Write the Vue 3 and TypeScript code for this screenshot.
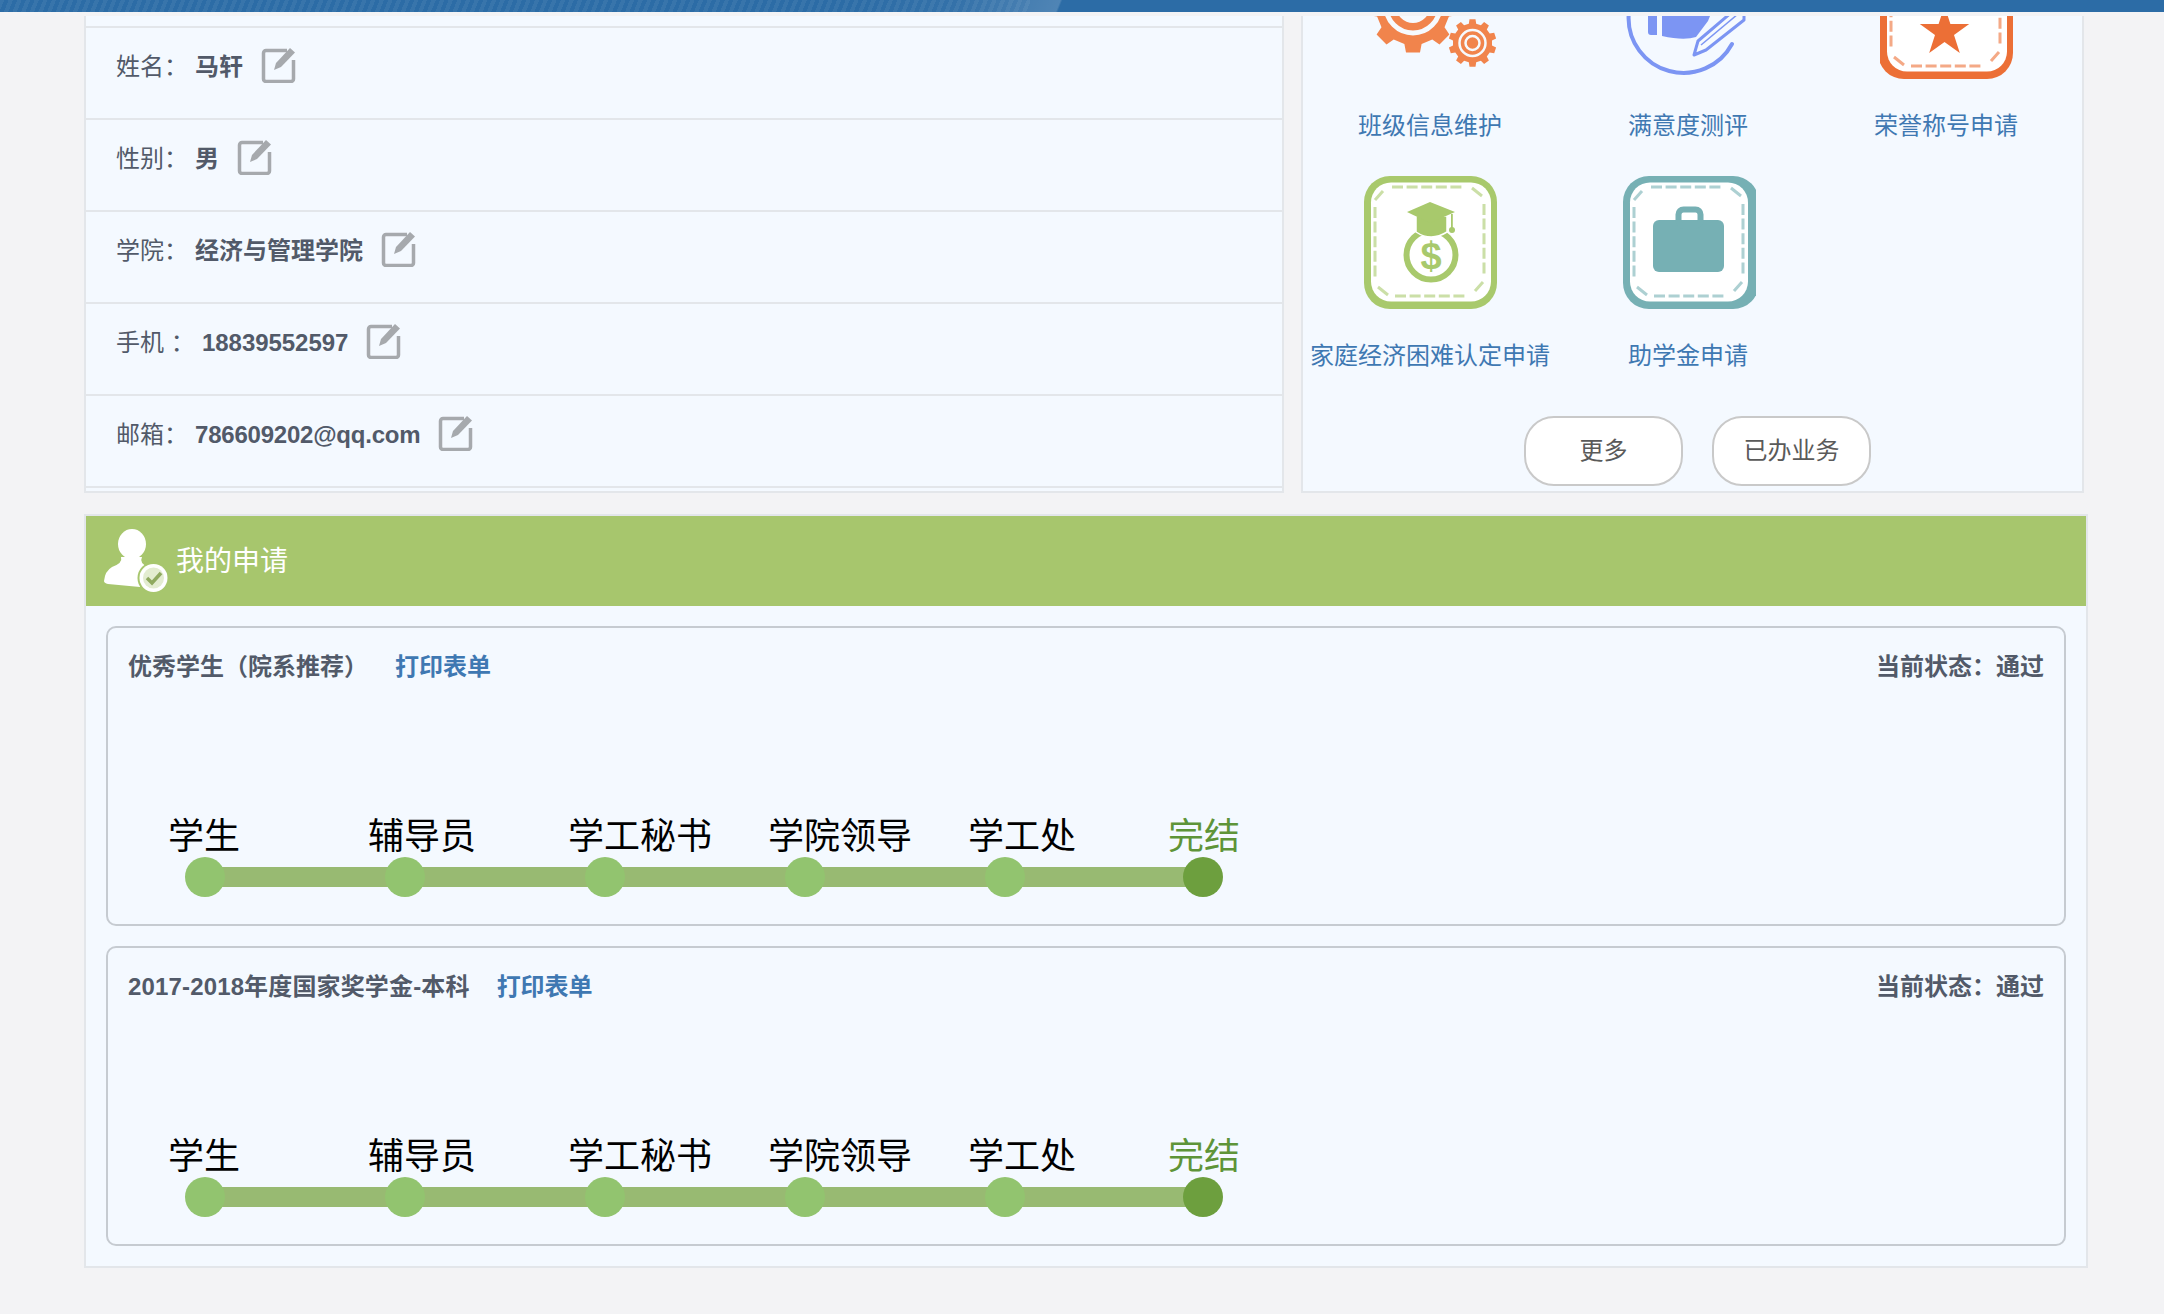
<script setup lang="ts">
interface Field { label: string; value: string; wide?: boolean; spacing?: number }
interface Card { title: string; gap: number; spacing: number }

const fields: Field[] = [
  { label: '姓名：', value: '马轩' },
  { label: '性别：', value: '男' },
  { label: '学院：', value: '经济与管理学院' },
  { label: '手机 ：', value: '18839552597', wide: true, spacing: -0.05 },
  { label: '邮箱：', value: '786609202@qq.com', spacing: -0.22 },
]
const apps = [
  { kind: 'gear', name: '班级信息维护' },
  { kind: 'survey', name: '满意度测评' },
  { kind: 'star', name: '荣誉称号申请' },
  { kind: 'money', name: '家庭经济困难认定申请' },
  { kind: 'case', name: '助学金申请' },
]
const cards: Card[] = [
  { title: '优秀学生（院系推荐）', gap: 27, spacing: 0 },
  { title: '2017-2018年度国家奖学金-本科', gap: 27, spacing: 0.15 },
]
const steps = ['学生', '辅导员', '学工秘书', '学院领导', '学工处', '完结']
const colors: Record<string, string> = { star: '#ec6f36', money: '#a8c96c', case: '#76b0b4' }
function gearPath(cx: number, cy: number, r: number, teeth: number): string {
  let d = ''
  const step = (Math.PI * 2) / teeth
  const inner = r * 0.82
  for (let i = 0; i < teeth; i++) {
    const a = i * step
    const pts: [number, number][] = [
      [inner, a - step * 0.3],
      [r, a - step * 0.2],
      [r, a + step * 0.2],
      [inner, a + step * 0.3],
    ]
    for (const [rad, ang] of pts) {
      d += (d ? 'L' : 'M') + (cx + rad * Math.sin(ang)).toFixed(1) + ' ' + (cy + rad * Math.cos(ang)).toFixed(1)
    }
  }
  return d + 'Z'
}
const bigGear = gearPath(49, 62, 45, 8)
const smallGear = gearPath(108.500, 97, 24, 10)
</script>

<template>
  <div class="page">
    <div class="topbar"></div>
    <div class="main">
      <div class="upper">
        <section class="info">
          <div class="stub"></div>
          <div v-for="f in fields" :key="f.label" class="row">
            <span class="label" :class="{ wide: f.wide }">{{ f.label }}</span>
            <strong class="value" :style="{ letterSpacing: (f.spacing ?? 0) + 'px' }">{{ f.value }}</strong>
            <svg class="edit" width="36" height="36" viewBox="0 0 36 36" fill="none">
              <path d="M26 3.500H5a2.500 2.500 0 0 0-2.500 2.500v26a2.500 2.500 0 0 0 2.500 2.500h25a2.500 2.500 0 0 0 2.500-2.500V13" stroke="#a6a9ad" stroke-width="3.500" />
              <path d="M13 23l2-7L29 1l5 4.500-14 14.500z" fill="#a6a9ad" />
            </svg>
          </div>
        </section>

        <section class="apps">
          <div class="grid">
            <div v-for="a in apps" :key="a.name" class="app">
              <svg class="badge" :class="{ nudged: a.kind === 'case' }" width="133" height="133" viewBox="0 0 133 133" fill="none">
                <g v-if="a.kind === 'gear'" fill="#f1844c">
                  <path :d="bigGear" />
                  <circle cx="49" cy="60" r="27" fill="none" stroke="#f6fafe" stroke-width="5" />
                  <circle cx="49" cy="60" r="17" fill="#f6fafe" />
                  <path :d="smallGear" />
                  <circle cx="108.500" cy="97" r="13" fill="none" stroke="#f6fafe" stroke-width="2.500" />
                  <circle cx="108.500" cy="97" r="7" fill="none" stroke="#f6fafe" stroke-width="2.500" />
                </g>
                <g v-else-if="a.kind === 'survey'">
                  <path d="M6.600 70A55 55 0 0 0 110 98" stroke="#7c95f3" stroke-width="4" stroke-linecap="round" />
                  <path d="M26 60v26q0 3 3 3h6V60zM40 60v30q22 5 34 1l12-16 6-15z" fill="#7c95f3" />
                  <path d="M72 109l4-14 34-29 12 2v6L84 104z" fill="#f6fafe" stroke="#7c95f3" stroke-width="3" stroke-linejoin="round" />
                  <path d="M79 99l37-31" stroke="#7c95f3" stroke-width="1.500" />
                </g>
                <template v-else>
                  <rect :x="a.kind === 'star' ? -2 : 0" :width="a.kind === 'case' ? 136 : a.kind === 'star' ? 135 : 133" height="133" rx="26" :fill="colors[a.kind]" />
                  <rect x="7" y="6.500" :width="a.kind === 'case' ? 118 : 120" height="119" rx="20" fill="#fff" />
                  <g :stroke="colors[a.kind]" stroke-opacity="0.6" stroke-width="3">
                    <path d="M28 11H101M31 120H104M11 31V104M120 28V101" stroke-dasharray="11 3.600" />
                    <path d="M11 24L19 15M108 12L118 20M14 111L24 119M111 115L119 106" />
                  </g>
                </template>
                <path v-if="a.kind === 'star'" d="M64.500 60L70.400 77.900 89.200 78 74 89.100 79.800 107 64.500 96 49.200 107 55 89.100 39.800 78 58.600 77.900Z" fill="#ec6f36" />
                <g v-if="a.kind === 'money'" fill="#a8c96c">
                  <circle cx="67" cy="79" r="24.500" fill="none" stroke="#a8c96c" stroke-width="6" />
                  <path d="M52 40H83V56Q67 66 52 56Z" stroke="#fff" stroke-width="1.500" />
                  <path d="M66 26L91 36 66 47 43 36Z" />
                  <rect x="87" y="38" width="1.800" height="14" />
                  <circle cx="88" cy="54" r="3" />
                  <text x="67" y="93" text-anchor="middle" class="dollar">$</text>
                </g>
                <g v-if="a.kind === 'case'" fill="#76b0b4">
                  <rect x="30" y="44" width="71" height="52" rx="6" />
                  <rect x="55.500" y="33.500" width="22" height="16" rx="5" fill="none" stroke="#76b0b4" stroke-width="6" />
                </g>
              </svg>
              <a class="app-name">{{ a.name }}</a>
            </div>
          </div>
          <div class="btns">
            <button class="btn">更多</button>
            <button class="btn">已办业务</button>
          </div>
        </section>
      </div>

      <section class="apply">
        <header class="apply-head">
          <svg width="64" height="64" viewBox="0 0 64 64">
            <ellipse cx="28" cy="15" rx="14" ry="15" fill="#fff" />
            <path d="M17 28q2 6-9 10Q1 42 0 52q0 2 4 3L36 58 44 38q-9-4-6-10z" fill="#fff" />
            <circle cx="49.500" cy="49" r="16" fill="#a7c66d" />
            <circle cx="49.500" cy="49" r="14" fill="#fff" />
            <circle cx="49.500" cy="49" r="10.500" fill="#e3ecd0" />
            <path d="M43 49l5 5 9-10" fill="none" stroke="#8fa95f" stroke-width="3.500" />
          </svg>
          <span class="apply-title">我的申请</span>
        </header>
        <div class="apply-body">
          <article v-for="c in cards" :key="c.title" class="card">
            <div class="card-top">
              <div class="card-left">
                <strong class="card-title" :style="{ letterSpacing: c.spacing + 'px' }">{{ c.title }}</strong>
                <a class="print" :style="{ marginLeft: c.gap + 'px' }">打印表单</a>
              </div>
              <strong class="status">当前状态：通过</strong>
            </div>
            <div class="steps">
              <div v-for="(s, i) in steps" :key="s" class="step" :class="{ last: i === steps.length - 1 }">
                <div class="step-name">{{ s }}</div>
                <div class="dot"></div>
              </div>
            </div>
          </article>
        </div>
      </section>
    </div>
  </div>
</template>

<style scoped>
.page {
  min-height: 1314px;
  background: #f3f3f5;
  font-family: "Liberation Sans", "Noto Sans CJK SC", sans-serif;
  font-size: 24px;
  color: #525a69;
}
.topbar {
  height: 12px;
  background:
    linear-gradient(112deg, transparent 80%, rgba(255, 255, 255, 0.04) 90%, rgba(255, 255, 255, 0.17) 99.4%, transparent 99.6%) 0 0 / 1062px 100% no-repeat,
    repeating-linear-gradient(112deg, rgba(255, 255, 255, 0.06) 0 4px, transparent 4px 8px) 0 0 / 1030px 100% no-repeat,
    #2c6ca6;
}
.main {
  width: 2004px;
  margin-left: 84px;
  padding-top: 4px;
}
.upper {
  display: flex;
  gap: 17px;
  height: 477px;
}
.info {
  width: 1200px;
  box-sizing: border-box;
  background: #f4f9ff;
  border: 2px solid #e3e6ea;
  border-top: 0;
  overflow: hidden;
}
.stub {
  height: 10px;
  border-bottom: 2px solid #e3e6ea;
}
.row {
  height: 92px;
  box-sizing: border-box;
  padding: 0 0 12px 30px;
  display: flex;
  align-items: center;
  border-bottom: 2px solid #e3e6ea;
}
.label {
  width: 79px;
  line-height: 34px;
}
.label.wide {
  width: 86px;
}
.value {
  font-weight: 700;
  line-height: 34px;
}
.edit {
  margin: -5px 0 0 18px;
}
.apps {
  width: 783px;
  box-sizing: border-box;
  background: #f4f9ff;
  border: 2px solid #e3e6ea;
  border-top: 0;
  overflow: hidden;
  display: flex;
  flex-direction: column;
}
.grid {
  display: grid;
  grid-template-columns: repeat(3, 258px);
  grid-auto-rows: 230px;
  margin-top: -70px;
  margin-left: -2px;
  flex: none;
}
.app {
  display: flex;
  flex-direction: column;
  align-items: center;
}
.badge {
  flex: none;
  overflow: hidden;
}
.badge.nudged {
  margin-left: 2px;
}
.app-name {
  margin-top: 30px;
  line-height: 34px;
  color: #3f78b2;
  white-space: nowrap;
}
.dollar {
  font: 700 38px "Liberation Sans", sans-serif;
}
.btns {
  display: flex;
  justify-content: center;
  gap: 29px;
  padding-left: 10px;
  margin-top: 10px;
}
.btn {
  width: 159px;
  height: 70px;
  box-sizing: border-box;
  background: #fff;
  border: 2px solid #c9c9c9;
  border-radius: 30px;
  font: inherit;
  color: #5a5a5a;
  padding: 0 0 5px;
}
.apply {
  margin-top: 21px;
  background: #f4f9ff;
  border: 2px solid #e3e6ea;
  box-sizing: border-box;
}
.apply-head {
  height: 90px;
  background: #a7c66d;
  display: flex;
  align-items: center;
  padding-left: 18px;
  gap: 8px;
}
.apply-title {
  color: #fff;
  font-size: 28px;
  margin-top: -4px;
}
.apply-body {
  padding: 20px;
  display: flex;
  flex-direction: column;
  gap: 20px;
}
.card {
  height: 300px;
  box-sizing: border-box;
  border: 2px solid #c6cbd1;
  border-radius: 10px;
  padding: 22px 20px 27px;
  display: flex;
  flex-direction: column;
}
.card-top {
  display: flex;
  justify-content: space-between;
  line-height: 34px;
}
.card-left {
  display: flex;
}
.print {
  color: #3f78b2;
  font-weight: 700;
}
.steps {
  margin-top: auto;
  padding-left: 40px;
  display: flex;
}
.step {
  width: 200px;
  position: relative;
}
.step-name {
  font-size: 36px;
  line-height: 44px;
  color: #000;
  margin-bottom: -2px;
  white-space: nowrap;
}
.step.last .step-name {
  color: #5e9438;
}
.dot {
  position: relative;
  z-index: 1;
  width: 40px;
  height: 40px;
  margin-left: 17px;
  border-radius: 50%;
  background: #92c46f;
}
.step.last .dot {
  margin-left: 15px;
  background: #6d9f3e;
}
.step:not(.last)::after {
  content: "";
  position: absolute;
  left: 37px;
  bottom: 10px;
  width: 198px;
  height: 20px;
  background: #98ba72;
}
</style>
